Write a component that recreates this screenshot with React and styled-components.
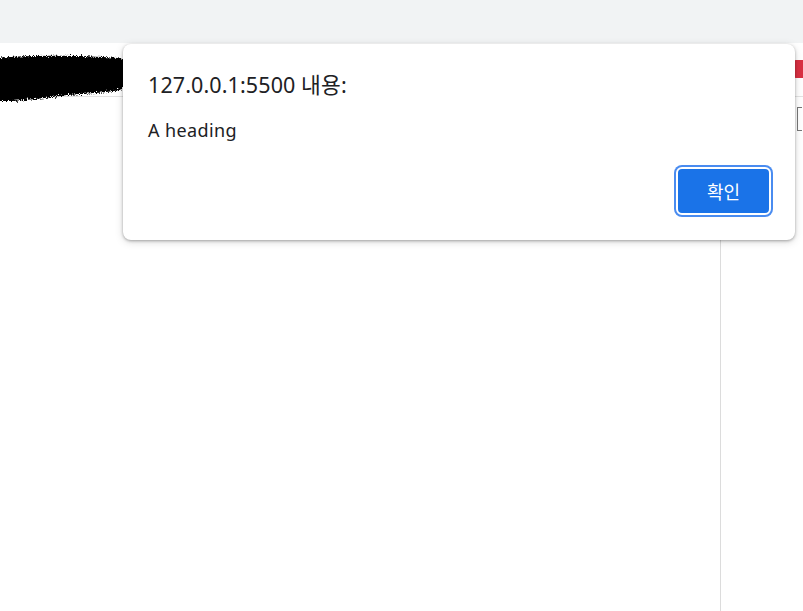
import React from 'react'
import styled, { createGlobalStyle } from 'styled-components'

const Global = createGlobalStyle`
  html, body {
    margin: 0;
    padding: 0;
    background: #ffffff;
    font-family: 'Noto Sans', 'Noto Sans CJK KR', sans-serif;
    overflow: hidden;
  }
`

const Window = styled.div`
  position: relative;
  width: 803px;
  height: 611px;
  display: flex;
  flex-direction: column;
  background: #ffffff;
  overflow: hidden;
`

const TabStrip = styled.div`
  height: 43px;
  background: #f1f3f4;
  flex-shrink: 0;
`

const Toolbar = styled.div`
  height: 53px;
  border-bottom: 1px solid #e3e3e3;
  display: flex;
  align-items: flex-start;
  justify-content: space-between;
  flex-shrink: 0;
`

const Scribble = styled.svg`
  display: block;
  margin-top: 9px;
`

const Badge = styled.div`
  width: 10px;
  height: 18px;
  background: #d93042;
  border-radius: 3px 0 0 3px;
  margin-top: 17px;
`

const Body = styled.div`
  flex: 1;
  display: flex;
`

const Main = styled.div`
  width: 720px;
  border-right: 1px solid #dcdcdc;
`

const Side = styled.div`
  flex: 1;
  padding: 10px 0 0 76px;
`

const Bracket = styled.div`
  width: 4px;
  height: 22px;
  border: 1px solid #777;
  border-right: none;
`

const Dialog = styled.div`
  position: absolute;
  left: 123px;
  top: 44px;
  width: 672px;
  height: 196px;
  box-sizing: border-box;
  background: #ffffff;
  border-radius: 8px;
  box-shadow: 0 1px 3px rgba(0, 0, 0, 0.3), 0 2px 8px rgba(0, 0, 0, 0.15);
  padding: 26px 24px 24px 25px;
  display: flex;
  flex-direction: column;
`

const Title = styled.div`
  font-size: 21.5px;
  line-height: 30px;
  color: #202124;
  letter-spacing: 0.1px;
`

const Message = styled.div`
  margin-top: 19px;
  font-size: 18px;
  line-height: 22px;
  color: #202124;
  letter-spacing: 0.4px;
`

const Footer = styled.div`
  margin-top: auto;
  display: flex;
  justify-content: flex-end;
`

const Button = styled.button`
  width: 95px;
  height: 48px;
  box-sizing: border-box;
  background: #1a73e8;
  color: #ffffff;
  border: 2px solid #ffffff;
  border-radius: 6px;
  box-shadow: 0 0 0 2px #4a8cf0;
  font-family: 'Noto Sans CJK KR', 'Noto Sans', sans-serif;
  font-size: 18px;
  margin-bottom: 1px;
  display: flex;
  align-items: center;
  justify-content: center;
`

export default function App() {
  return (
    <>
      <Global />
      <Window>
        <TabStrip />
        <Toolbar>
          <Scribble width="136" height="54" viewBox="0 0 136 54">
            <defs>
              <filter id="rough" x="-10%" y="-20%" width="120%" height="140%">
                <feTurbulence type="fractalNoise" baseFrequency="0.8" numOctaves="2" seed="5" />
                <feDisplacementMap in="SourceGraphic" scale="6" />
              </filter>
            </defs>
            <path
              d="M-6 6 C30 3 80 3 118 6 C130 8 133 18 131 28 C128 40 110 40 80 42 C50 44 30 50 -6 49 Z"
              fill="#050505"
              filter="url(#rough)"
            />
          </Scribble>
          <Badge />
        </Toolbar>
        <Body>
          <Main />
          <Side>
            <Bracket />
          </Side>
        </Body>
        <Dialog>
          <Title>127.0.0.1:5500 내용:</Title>
          <Message>A heading</Message>
          <Footer>
            <Button>확인</Button>
          </Footer>
        </Dialog>
      </Window>
    </>
  )
}
